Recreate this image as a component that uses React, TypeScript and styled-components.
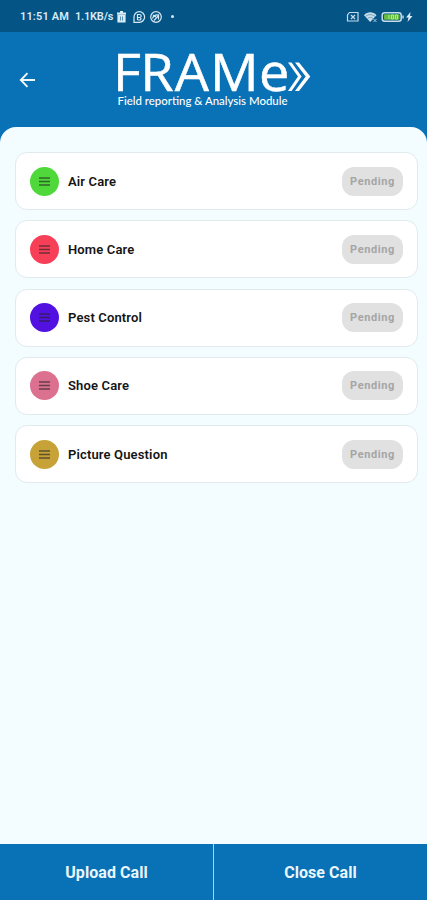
import React from 'react';
import styled, { createGlobalStyle } from 'styled-components';

const Global = createGlobalStyle`
  * { box-sizing: border-box; }
  body { margin: 0; font-family: Roboto, "Liberation Sans", sans-serif; }
`;

const Screen = styled.div`
  display: flex;
  flex-direction: column;
  width: 100%;
  height: 900px;
  overflow: hidden;
  background: #0971b5;
`;

const StatusBar = styled.div`
  display: flex;
  align-items: center;
  justify-content: space-between;
  height: 32px;
  flex: none;
  padding: 2px 14px 0 20px;
  background: #055486;
  color: #d9ebf6;
`;

const StatusGroup = styled.div`
  display: flex;
  align-items: center;
`;

const StatusText = styled.span<{ $width: number; $spacing: number }>`
  width: ${(p) => p.$width}px;
  font-size: 11px;
  font-weight: 600;
  line-height: 14px;
  letter-spacing: ${(p) => p.$spacing}px;
  white-space: nowrap;
`;

const Header = styled.header`
  display: flex;
  align-items: flex-start;
  height: 95px;
  flex: none;
  padding-left: 18px;
`;

const BackButton = styled.button`
  display: flex;
  width: 20px;
  height: 20px;
  margin: 38px 73px 0 0;
  padding: 0;
  border: 0;
  background: none;
`;

const LogoDrawing = styled.svg`
  flex: none;
  margin-top: 2px;
`;

const Panel = styled.main`
  display: flex;
  flex: 1;
  flex-direction: column;
  gap: 10.3px;
  padding: 25px 9px 0 15px;
  border-radius: 16px 16px 0 0;
  background: #f3fcff;
`;

const Card = styled.div`
  display: flex;
  align-items: center;
  height: 58px;
  flex: none;
  padding: 0 14px;
  border: 1px solid #e1eaed;
  border-radius: 12px;
  background: #fff;
`;

const Badge = styled.div<{ $color: string }>`
  display: flex;
  align-items: center;
  justify-content: center;
  width: 29px;
  height: 29px;
  margin-right: 9px;
  border-radius: 50%;
  background: ${(p) => p.$color};
`;

const Label = styled.span`
  flex: 1;
  color: #151515;
  font-size: 13px;
  font-weight: 600;
  letter-spacing: 0.15px;
`;

const Status = styled.div`
  display: flex;
  align-items: center;
  justify-content: center;
  width: 61px;
  height: 29px;
  border-radius: 12px;
  background: #e1e1e1;
  color: #a5a5a5;
  font-size: 11px;
  font-weight: 700;
  letter-spacing: 0.6px;
`;

const Footer = styled.footer`
  display: grid;
  grid-template-columns: 213px 1fr;
  gap: 1px;
  height: 56px;
  flex: none;
  background: #a9d6ef;
`;

const Action = styled.button`
  padding: 0;
  border: 0;
  background: #0971b5;
  color: #eaf6fd;
  font: 700 16px Roboto, sans-serif;
  letter-spacing: 0.06px;
`;

const ITEMS = [
  { name: 'Air Care', color: '#4ed83a' },
  { name: 'Home Care', color: '#f83f58' },
  { name: 'Pest Control', color: '#5211e0' },
  { name: 'Shoe Care', color: '#dc718f' },
  { name: 'Picture Question', color: '#c7a237' },
];

const Logo = () => (
  <LogoDrawing width="206" height="76" viewBox="-6 -16 206 76" fill="#fff">
    <text
      x="-3.8 22.2 54.9 88.6 135.2"
      y="41"
      transform="scale(1.05 1)"
      fontFamily="Open Sans, sans-serif"
      fontSize="51.5"
      stroke="#fff"
      strokeWidth="0.5"
    >
      FRAMe
    </text>
    <path d="M171 12.500h3.600l10 14-10 14.500H171l10-14.500z" />
    <path d="M178 12.500h4l11.300 14-11.300 14.500h-4l10.700-14.500z" />
    <text x="0.500" y="55" fontFamily="Lato, sans-serif" fontSize="11" fontWeight="500" textLength="170" lengthAdjust="spacingAndGlyphs">Field reporting &amp; Analysis Module</text>
  </LogoDrawing>
);

const Notifications = () => (
  <svg width="62" height="14" viewBox="0 0 62 14" fill="none" stroke="#d9ebf6" strokeWidth="1.200">
    <path d="M1 3.500h9M4 2h3" strokeWidth="2" />
    <path d="M2 5h7v7H2z" fill="#d9ebf6" />
    <path d="M4.500 6.500v4M6.500 6.500v4" stroke="#3b7aa3" strokeWidth="0.800" />
    <path d="M18 12.300V7a5.300 5.300 0 1 1 5.300 5.300z" />
    <path d="M21.500 10V4.500h2.200a1.500 1.500 0 0 1 0 3h-2m2 0a1.200 1.200 0 0 1 0 2.500h-2" />
    <circle cx="40" cy="7" r="5.300" />
    <path d="M36.500 8.500c1-3 3-4 6-3.500m-4.500 5.500 4.500-5v4M37 5l3 2" />
    <circle cx="56.500" cy="6.500" r="1.500" fill="#d9ebf6" stroke="none" />
  </svg>
);

const SystemIcons = () => (
  <svg width="67" height="14" viewBox="0 0 67 14" fill="none" stroke="#c5dce9">
    <path d="M3.500 2.500h8.500v8.500h-10.500V5z" strokeWidth="1.200" />
    <path d="m5 5 4 4m0-4-4 4" strokeWidth="1.200" />
    <path d="M18 5.200c3.500-3.800 9-3.800 12.500 0L24.200 12z" fill="#c5dce9" stroke="none" />
    <path d="M19.500 6.500c3-2.500 6.500-2.500 9.500 0M21.500 8.500c2-1.500 3.800-1.500 5.500 0" stroke="#427ba0" strokeWidth="0.600" />
    <path d="m27.500 9 3 3m0-3-3 3" strokeWidth="0.800" />
    <rect x="36.200" y="2.700" width="19" height="8.600" rx="2.500" strokeWidth="1.500" />
    <rect x="38" y="4.300" width="15.500" height="5.400" rx="1" fill="#64be3c" stroke="none" />
    <path d="M43 5v4M45.500 5h2v4h-2zM49.500 5h2v4h-2z" stroke="#c8ebbc" strokeWidth="0.800" />
    <path d="M57 5.500v3" strokeWidth="1.500" />
    <path d="m64.500 2-4.500 5.500h2.500L61.500 12l5-6H64z" fill="#d9ebf6" stroke="none" />
  </svg>
);

const MenuLines = () => (
  <svg width="11" height="9" viewBox="0 0 11 9" stroke="#252525" strokeOpacity="0.650" strokeWidth="1.300">
    <path d="M0 1h11M0 4.500h11M0 8h11" />
  </svg>
);

export default function App() {
  return (
    <Screen>
      <Global />
      <StatusBar>
        <StatusGroup>
          <StatusText $width={55} $spacing={0.15}>11:51 AM</StatusText>
          <StatusText $width={41} $spacing={-0.2}>1.1KB/s</StatusText>
          <Notifications />
        </StatusGroup>
        <SystemIcons />
      </StatusBar>
      <Header>
        <BackButton aria-label="Back">
          <svg width="20" height="20" viewBox="0 0 20 20" fill="none" stroke="#edf8ff" strokeWidth="1.900">
            <path d="M17 10H3M9.500 3.200 2.800 10l6.700 6.800" />
          </svg>
        </BackButton>
        <Logo />
      </Header>
      <Panel>
        {ITEMS.map((item) => (
          <Card key={item.name}>
            <Badge $color={item.color}><MenuLines /></Badge>
            <Label>{item.name}</Label>
            <Status>Pending</Status>
          </Card>
        ))}
      </Panel>
      <Footer>
        <Action>Upload Call</Action>
        <Action>Close Call</Action>
      </Footer>
    </Screen>
  );
}
